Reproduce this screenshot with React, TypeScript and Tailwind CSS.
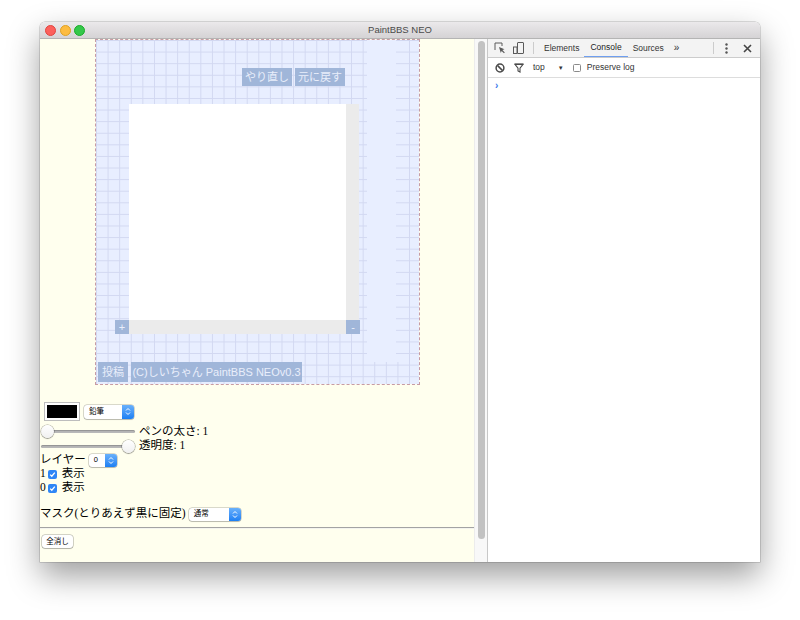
import React from 'react';

const serif = "font-['Liberation_Serif','Noto_Sans_CJK_JP',serif]";
const sans = "font-['Liberation_Sans','Noto_Sans_CJK_JP',sans-serif]";

function MacSelect({ label, className }: { label: string; className: string }) {
  return (
    <div className={`flex items-stretch rounded-[3px] bg-white shadow-[0_0_0_0.5px_rgba(0,0,0,0.3),0_1px_1px_rgba(0,0,0,0.15)] ${className}`}>
      <span className={`flex-1 pl-[5px] text-[7.5px] leading-none flex items-center text-black ${sans}`}>{label}</span>
      <span className="w-[12px] rounded-r-[3px] bg-gradient-to-b from-[#68b0fb] to-[#1a7ff3] flex items-center justify-center">
        <svg width="6" height="9" viewBox="0 0 6 9">
          <path d="M1 3.5L3 1.5L5 3.5M1 5.5L3 7.5L5 5.5" stroke="white" strokeWidth="1" fill="none" />
        </svg>
      </span>
    </div>
  );
}

function Slider({ right }: { right?: boolean }) {
  return (
    <div className="relative w-[94px] h-[13px] flex items-center">
      <div className="h-[3px] w-full rounded-full bg-[#b8b8b8] shadow-[inset_0_1px_1px_rgba(0,0,0,0.2)]" />
      <div
        className={`absolute top-0 ${right ? 'right-0' : 'left-0'} w-[13px] h-[13px] rounded-full bg-gradient-to-b from-white to-[#f0f0f0] shadow-[0_0_0_0.5px_rgba(0,0,0,0.35),0_1px_1px_rgba(0,0,0,0.25)]`}
      />
    </div>
  );
}

function Check() {
  return (
    <span className="w-[9px] h-[9px] rounded-[2px] bg-[#2f86f6] flex items-center justify-center">
      <svg width="7" height="7" viewBox="0 0 7 7">
        <path d="M1.2 3.6L2.8 5.2L5.8 1.6" stroke="white" strokeWidth="1.3" fill="none" />
      </svg>
    </span>
  );
}

function NeoButton({ children, className }: { children: React.ReactNode; className: string }) {
  return (
    <div className={`bg-[#a0b6d9] text-[#e9eefb] flex items-center justify-center text-[11px] leading-none ${sans} ${className}`}>
      {children}
    </div>
  );
}

const grid =
  'bg-[#e8eeff] bg-[linear-gradient(to_right,#d2d8f1_1px,transparent_1px),linear-gradient(to_bottom,#d2d8f1_1px,transparent_1px)] bg-size-[11.6px_11.6px]';
const hTicks = 'bg-[linear-gradient(to_bottom,#d2d8f1_1px,transparent_1px)] bg-size-[11.6px_11.6px]';

function PaintArea() {
  return (
    <div className="ml-[55px] w-[325px] h-[346px] border border-dashed border-[#c79ba4]">
      <div className={`relative w-full h-full flex flex-col ${grid}`}>
        <div className="absolute top-0 left-[268px] w-[36px] h-[322px] bg-[#e8eeff] flex justify-between">
          <div className={`w-[3px] h-full ${hTicks}`} />
          <div className={`w-[4px] h-full ${hTicks}`} />
        </div>
        <div className="relative mt-[28px] ml-[146px] flex gap-[3px]">
          <NeoButton className="w-[50px] h-[18px]">やり直し</NeoButton>
          <NeoButton className="w-[50px] h-[18px]">元に戻す</NeoButton>
        </div>
        <div className="relative mt-[18px] ml-[19px] flex flex-col">
          <div className="flex h-[216px]">
            <div className="w-[14px]" />
            <div className="w-[217px] bg-white" />
            <div className="w-[13px] bg-[#ebebeb]" />
          </div>
          <div className="flex h-[14px]">
            <NeoButton className="w-[14px] h-[14px] text-[8px]">+</NeoButton>
            <div className="w-[217px] bg-[#ebebeb]" />
            <NeoButton className="w-[14px] h-[14px] text-[8px]">-</NeoButton>
          </div>
        </div>
        <div className="relative mt-[28px] ml-[2px] flex gap-[3px]">
          <NeoButton className="w-[30px] h-[20px]">投稿</NeoButton>
          <NeoButton className="w-[171px] h-[20px]">(C)しいちゃん PaintBBS NEOv0.3</NeoButton>
        </div>
      </div>
    </div>
  );
}

function Controls() {
  return (
    <div className={`flex flex-col text-[11.5px] text-black ${serif}`}>
      <div className="mt-[17px] ml-[4px] flex items-center h-[19px] gap-[4px]">
        <div className="w-[36px] h-[19px] border border-[#bdbdbd] bg-white p-[2px]">
          <div className="w-full h-full bg-black" />
        </div>
        <MacSelect label="鉛筆" className="w-[50px] h-[14px]" />
      </div>
      <div className="mt-[3px] ml-[1px] flex items-center h-[15px] gap-[4px]">
        <Slider />
        <span className="leading-none">ペンの太さ: 1</span>
      </div>
      <div className="ml-[1px] flex items-center h-[14px] gap-[4px]">
        <Slider right />
        <span className="leading-none">透明度: 1</span>
      </div>
      <div className="flex items-center h-[14px] gap-[3px]">
        <span className="leading-none">レイヤー</span>
        <MacSelect label="0" className="w-[28px] h-[13px]" />
      </div>
      <div className="flex items-center h-[14px] gap-[2px]">
        <span className="leading-none">1</span>
        <Check />
        <span className="leading-none ml-[3px]">表示</span>
      </div>
      <div className="flex items-center h-[14px] gap-[2px]">
        <span className="leading-none">0</span>
        <Check />
        <span className="leading-none ml-[3px]">表示</span>
      </div>
      <div className="mt-[12px] flex items-center h-[14px] gap-[3px]">
        <span className="leading-none">マスク(とりあえず黒に固定)</span>
        <MacSelect label="通常" className="w-[52px] h-[13px]" />
      </div>
      <div className="mt-[6px] h-[2px] border-t border-[#a3a3a3] bg-[#f4f4ee]" />
      <div className="mt-[6px] ml-[2px]">
        <div className={`w-[31px] h-[13px] rounded-[3px] bg-white shadow-[0_0_0_0.5px_rgba(0,0,0,0.35),0_1px_1px_rgba(0,0,0,0.15)] flex items-center justify-center text-[7.5px] leading-none ${sans}`}>
          全消し
        </div>
      </div>
    </div>
  );
}

function DevTools() {
  return (
    <div className={`flex-1 bg-white flex flex-col text-[8.5px] text-[#333] ${sans}`}>
      <div className="h-[19px] bg-[#f3f3f3] border-b border-[#cccccc] flex items-center">
        <svg className="ml-[6px]" width="12" height="12" viewBox="0 0 12 12">
          <path d="M1 8V1H8V4" stroke="#5a5a5a" strokeWidth="1" fill="none" />
          <path d="M5 5L10.5 7.2L8.4 8.1L10.8 10.5L10 11.3L7.6 8.9L6.8 11Z" fill="#5a5a5a" />
        </svg>
        <svg className="ml-[7px]" width="12" height="12" viewBox="0 0 12 12">
          <rect x="4.5" y="0.5" width="6" height="11" rx="0.5" stroke="#5a5a5a" fill="none" />
          <rect x="0.5" y="5" width="3.5" height="6.5" stroke="#5a5a5a" fill="none" />
        </svg>
        <div className="ml-[8px] w-[1px] h-[12px] bg-[#cccccc]" />
        <span className="ml-[10px]">Elements</span>
        <span className="ml-[5px] h-full px-[6px] flex items-center border-b-[1.5px] border-[#6f9ff0] text-[#222]">Console</span>
        <span className="ml-[5px]">Sources</span>
        <span className="ml-[10px] text-[10px] leading-none">»</span>
        <div className="flex-1" />
        <div className="w-[1px] h-[12px] bg-[#cccccc]" />
        <svg className="ml-[11px]" width="3" height="11" viewBox="0 0 3 11">
          <circle cx="1.5" cy="1.5" r="1.2" fill="#555" />
          <circle cx="1.5" cy="5.5" r="1.2" fill="#555" />
          <circle cx="1.5" cy="9.5" r="1.2" fill="#555" />
        </svg>
        <svg className="ml-[15px] mr-[8px]" width="9" height="9" viewBox="0 0 9 9">
          <path d="M1 1L8 8M8 1L1 8" stroke="#444" strokeWidth="1.6" />
        </svg>
      </div>
      <div className="h-[20px] border-b border-[#dddddd] flex items-center">
        <svg className="ml-[7px]" width="10" height="10" viewBox="0 0 10 10">
          <circle cx="5" cy="5" r="3.9" stroke="#4a4a4a" strokeWidth="1.5" fill="none" />
          <path d="M2.4 2.4L7.6 7.6" stroke="#4a4a4a" strokeWidth="1.5" />
        </svg>
        <svg className="ml-[9px]" width="10" height="10" viewBox="0 0 10 10">
          <path d="M0.8 1.2H9.2L6 5.2V9L4 8V5.2Z" stroke="#4a4a4a" strokeWidth="1.1" fill="none" />
          <path d="M0.8 1.2H9.2" stroke="#4a4a4a" strokeWidth="1.6" />
        </svg>
        <span className="ml-[9px]">top</span>
        <span className="ml-[13px] text-[6px] leading-none">▼</span>
        <span className="ml-[9px] w-[8px] h-[8px] rounded-[1.5px] border border-[#8a8a8a] bg-white" />
        <span className="ml-[6px]">Preserve log</span>
      </div>
      <div className="pl-[7px] pt-[2px] text-[#3a7bea] font-bold text-[10px] leading-[12px]">›</div>
    </div>
  );
}

export default function App() {
  return (
    <div className="w-[800px] h-[620px] bg-white pt-[22px] pl-[40px]">
      <div className="w-[720px] h-[540px] rounded-t-[5px] overflow-hidden flex flex-col shadow-[0_14px_32px_rgba(0,0,0,0.38),0_0_0_0.5px_rgba(0,0,0,0.25)]">
        <div className="h-[17px] bg-gradient-to-b from-[#ebe9eb] to-[#d5d3d5] border-b border-[#b4b4b4] grid grid-cols-[1fr_auto_1fr] items-center">
          <div className="flex items-center gap-[3.5px] pl-[5px]">
            <span className="w-[11px] h-[11px] rounded-full bg-[#fc605c] border border-[#e0443e]" />
            <span className="w-[11px] h-[11px] rounded-full bg-[#fdbc40] border border-[#dea123]" />
            <span className="w-[11px] h-[11px] rounded-full bg-[#34c84a] border border-[#1aab29]" />
          </div>
          <span className={`text-[9.5px] text-[#4a4a4a] ${sans}`}>PaintBBS NEO</span>
          <div />
        </div>
        <div className="flex flex-1 min-h-0">
          <div className="w-[434px] bg-[#ffffee] overflow-hidden">
            <PaintArea />
            <Controls />
          </div>
          <div className="w-[13px] bg-[#f8f8f8] border-l border-[#ececec] flex justify-center pt-[2px] pb-[23px]">
            <div className="w-[7px] h-full rounded-full bg-[#c2c2c2]" />
          </div>
          <div className="w-[1px] bg-[#c8c8c8]" />
          <DevTools />
        </div>
      </div>
    </div>
  );
}
